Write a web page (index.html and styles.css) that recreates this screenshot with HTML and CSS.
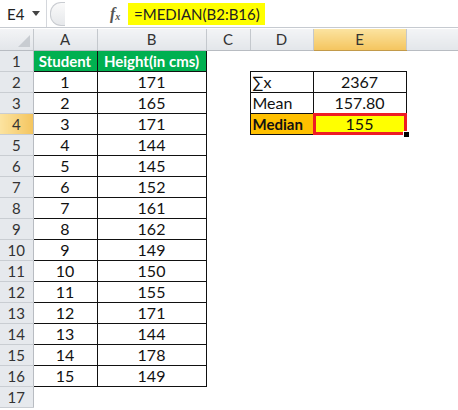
FILE: index.html
```html
<!doctype html>
<html lang="en">
  <head>
    <meta charset="UTF-8" />
    <title>MEDIAN</title>
    <link rel="stylesheet" href="styles.css">
  </head>
  <body>
    <div class="fbar">
      <div class="namebox">
        <span>E4</span>
        <svg class="drop" width="8" height="5" viewBox="0 0 8 5"><path d="M0 0h8L4 5z" fill="#444"/></svg>
      </div>
      <div class="split"></div>
      <div class="fx">f<sub>x</sub></div>
      <div class="formula"><span class="hl">=MEDIAN(B2:B16)</span></div>
    </div>

    <table class="sheet">
      <colgroup>
        <col class="c-rh"><col class="c-a"><col class="c-b"><col class="c-c"><col class="c-d"><col class="c-e"><col>
      </colgroup>
      <thead>
        <tr>
          <th class="corner"><span class="tri"></span></th>
          <th>A</th><th>B</th><th>C</th><th>D</th><th class="sel">E</th><th class="last"></th>
        </tr>
      </thead>
      <tbody>
        <tr><th>1</th><td class="hd">Student</td><td class="hd">Height(in cms)</td><td></td><td></td><td></td><td></td></tr>
        <tr><th>2</th><td class="v">1</td><td class="v">171</td><td></td><td class="lbl">∑x</td><td class="v">2367</td><td></td></tr>
        <tr><th>3</th><td class="v">2</td><td class="v">165</td><td></td><td class="lbl">Mean</td><td class="v">157.80</td><td></td></tr>
        <tr><th class="sel">4</th><td class="v">3</td><td class="v">171</td><td></td><td class="lbl med">Median</td><td class="v active">155</td><td></td></tr>
        <tr><th>5</th><td class="v">4</td><td class="v">144</td><td></td><td></td><td></td><td></td></tr>
        <tr><th>6</th><td class="v">5</td><td class="v">145</td><td></td><td></td><td></td><td></td></tr>
        <tr><th>7</th><td class="v">6</td><td class="v">152</td><td></td><td></td><td></td><td></td></tr>
        <tr><th>8</th><td class="v">7</td><td class="v">161</td><td></td><td></td><td></td><td></td></tr>
        <tr><th>9</th><td class="v">8</td><td class="v">162</td><td></td><td></td><td></td><td></td></tr>
        <tr><th>10</th><td class="v">9</td><td class="v">149</td><td></td><td></td><td></td><td></td></tr>
        <tr><th>11</th><td class="v">10</td><td class="v">150</td><td></td><td></td><td></td><td></td></tr>
        <tr><th>12</th><td class="v">11</td><td class="v">155</td><td></td><td></td><td></td><td></td></tr>
        <tr><th>13</th><td class="v">12</td><td class="v">171</td><td></td><td></td><td></td><td></td></tr>
        <tr><th>14</th><td class="v">13</td><td class="v">144</td><td></td><td></td><td></td><td></td></tr>
        <tr><th>15</th><td class="v">14</td><td class="v">178</td><td></td><td></td><td></td><td></td></tr>
        <tr><th>16</th><td class="v">15</td><td class="v">149</td><td></td><td></td><td></td><td></td></tr>
        <tr><th>17</th><td></td><td></td><td></td><td></td><td></td><td></td></tr>
      </tbody>
    </table>
  </body>
</html>
```

FILE: styles.css
```css
body {
  margin: 0;
  background-color: #fff;
  font-family: Lato, "Liberation Sans", sans-serif;
  font-size: 15px;
  color: #222;
  overflow: hidden;
}
.fbar {
  display: flex;
  align-items: center;
  height: 27px;
  border-bottom: 1px solid #c6cad0;
  background-color: #fff;
}
.namebox {
  display: flex;
  align-items: center;
  width: 47px;
  height: 100%;
  box-sizing: border-box;
  padding-left: 7px;
  border-right: 1px solid #d4d7dc;
}
.namebox span {
  flex: 1;
}
.drop {
  margin-right: 6px;
}
.split {
  width: 14px;
  height: 22px;
  margin-left: 3px;
  border-radius: 11px 0 0 11px;
  border: 1px solid #c9ccd1;
  border-right: none;
  background: linear-gradient(#fafafa, #e6e8eb);
}
.fx {
  margin-left: 45px;
  width: 18px;
  font-family: "Liberation Serif", serif;
  font-style: italic;
  font-weight: bold;
  font-size: 16px;
  color: #555;
}
.fx sub {
  font-size: 10px;
  vertical-align: -1px;
}
.formula {
  flex: 1;
  height: 100%;
  display: flex;
  align-items: center;
}
.hl {
  background-color: #ffff00;
  padding: 2px 5px 2px 6px;
  line-height: 18px;
}
.sheet {
  margin-top: 1px;
  border-collapse: collapse;
  table-layout: fixed;
  width: 458px;
}
.c-rh { width: 33px; }
.c-a { width: 64px; }
.c-b { width: 109px; }
.c-c { width: 44px; }
.c-d { width: 63px; }
.c-e { width: 93px; }
.sheet th,
.sheet td {
  height: 21px;
  padding: 0;
  box-sizing: border-box;
  line-height: 18px;
}
.sheet thead th {
  font-weight: normal;
  color: #333;
  background: linear-gradient(#f3f4f6, #e3e6ea);
  border-right: 1px solid #c4c8cd;
  border-bottom: 1px solid #b8bcc2;
  text-align: center;
}
.sheet thead th.last {
  border-right: none;
}
.sheet thead th.sel {
  background: linear-gradient(#fbe3a0, #f4c55f);
  border-bottom: 1px solid #c29a4a;
}
.corner {
  position: relative;
}
.tri {
  position: absolute;
  right: 3px;
  bottom: 3px;
  width: 0;
  height: 0;
  border-left: 12px solid transparent;
  border-bottom: 12px solid #c8ccd1;
}
.sheet tbody th {
  font-weight: normal;
  color: #333;
  background-color: #e6e9ed;
  border-right: 1px solid #b8bcc2;
  border-bottom: 1px solid #c9cdd2;
  text-align: center;
}
.sheet tbody th.sel {
  background: linear-gradient(90deg, #fbe3a0, #f4c55f);
}
.hd {
  background-color: #00b050;
  color: #fff;
  font-weight: bold;
  text-align: center;
  border: 1px solid #111;
}
.v {
  text-align: center;
  border: 1px solid #111;
  color: #111;
  font-size: 16px;
}
.lbl {
  border: 1px solid #111;
  padding-left: 2px !important;
  color: #111;
  font-size: 16px;
}
.med {
  background-color: #ffc000;
  font-weight: bold;
  font-size: 15px;
}
.active {
  position: relative;
  background-color: #ffff00;
}
.active::before {
  content: "";
  position: absolute;
  inset: -1px;
  border: 3px solid #ee1c25;
}
.active::after {
  content: "";
  position: absolute;
  right: -4px;
  bottom: -4px;
  width: 5px;
  height: 5px;
  background-color: #000;
  border: 1px solid #fff;
}
```
